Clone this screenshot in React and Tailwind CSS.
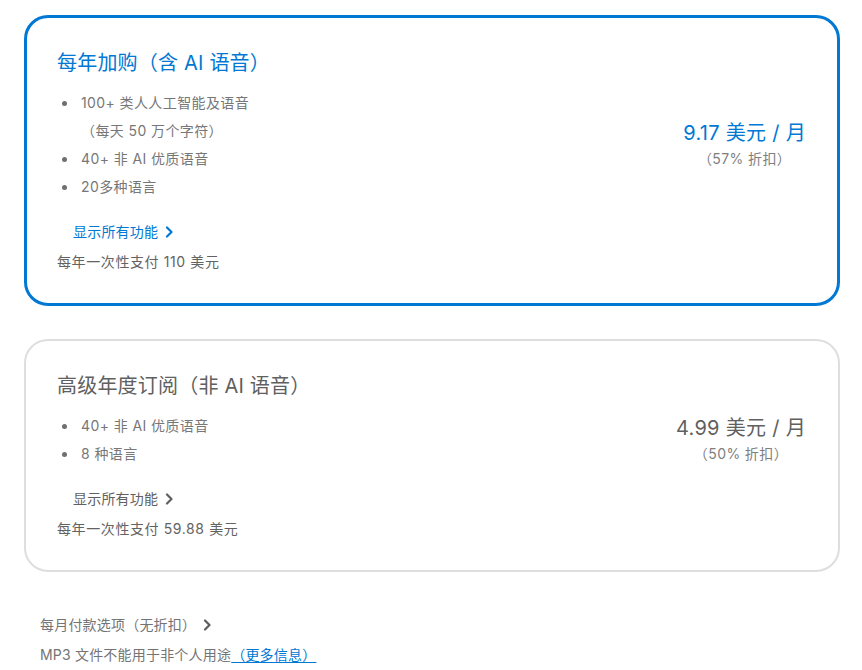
import React from "react";

const font = { fontFamily: 'Inter, "Noto Sans CJK SC", sans-serif' };

const Chevron = ({ className }) => (
    <svg className={className} width="8" height="12" viewBox="0 0 8 12" fill="none" stroke="currentColor" strokeWidth="2.2" strokeLinecap="round" strokeLinejoin="round">
        <path d="M2 1.5 6.5 6 2 10.5" />
    </svg>
);

const PlanCard = ({ active, title, features, price, discount, total }) => {
    const border = active ? "border-[3px] border-[#0078d4] pl-[30px] pr-[31px]" : "border-2 border-[#dedede] pl-[31px] pr-[32px]";
    const accent = active ? "text-[#0078d4]" : "text-[#606060]";
    return (
        <div className={`w-[816px] rounded-[24px] bg-white pt-[31px] pb-[27px] ${border}`}>
            <h2 className={`text-[20px] leading-[28px] tracking-[0.2px] ${accent}`}>{title}</h2>
            <div className="flex items-center mt-[12px]">
                <ul className="flex-1">
                    {features.map((f, i) => (
                        <li key={i} className="flex text-[14px] leading-[28px] tracking-[0.4px] text-[#777777]">
                            <span className="w-[15px] mr-[9px] flex justify-center pt-[12px]">
                                <span className="w-[5px] h-[5px] rounded-full bg-[#707070]" />
                            </span>
                            <span>
                                {f.map((line, j) => (
                                    <span key={j} className="block">{line}</span>
                                ))}
                            </span>
                        </li>
                    ))}
                </ul>
                <div className="flex flex-col items-center">
                    <div className={`text-[20px] leading-[28px] tracking-[0.3px] ${accent}`}>{price}</div>
                    <div className="text-[14px] leading-[24px] tracking-[0.4px] text-[#808080]">{discount}</div>
                </div>
            </div>
            <button className={`flex items-center gap-[7px] ml-[16px] mt-[17px] text-[14px] leading-[28px] tracking-[0.2px] ${active ? "text-[#0078d4]" : "text-[#606060]"}`}>
                显示所有功能
                <Chevron />
            </button>
            <p className="mt-[2px] text-[14px] leading-[28px] tracking-[0.6px] text-[#636363]">{total}</p>
        </div>
    );
};

export default function App() {
    return (
        <div className="w-[862px] h-[670px] bg-white overflow-hidden pl-6 pt-[15px]" style={font}>
            <PlanCard
                active
                title="每年加购（含 AI 语音）"
                features={[["100+ 类人人工智能及语音", "（每天 50 万个字符）"], ["40+ 非 AI 优质语音"], ["20多种语言"]]}
                price="9.17 美元 / 月"
                discount="（57% 折扣）"
                total="每年一次性支付 110 美元"
            />
            <div className="mt-[33px]">
                <PlanCard
                    title="高级年度订阅（非 AI 语音）"
                    features={[["40+ 非 AI 优质语音"], ["8 种语言"]]}
                    price="4.99 美元 / 月"
                    discount="（50% 折扣）"
                    total="每年一次性支付 59.88 美元"
                />
            </div>
            <div className="ml-4 mt-[38px] text-[14px] leading-[30px] tracking-[0.2px] text-[#747474]">
                <button className="flex items-center gap-[7px]">
                    每月付款选项（无折扣）
                    <Chevron className="text-[#5c5c5c]" />
                </button>
                <p>
                    MP3 文件不能用于非个人用途
                    <a href="#" className="text-[#0078d4] underline underline-offset-2">（更多信息）</a>
                </p>
            </div>
        </div>
    );
}
